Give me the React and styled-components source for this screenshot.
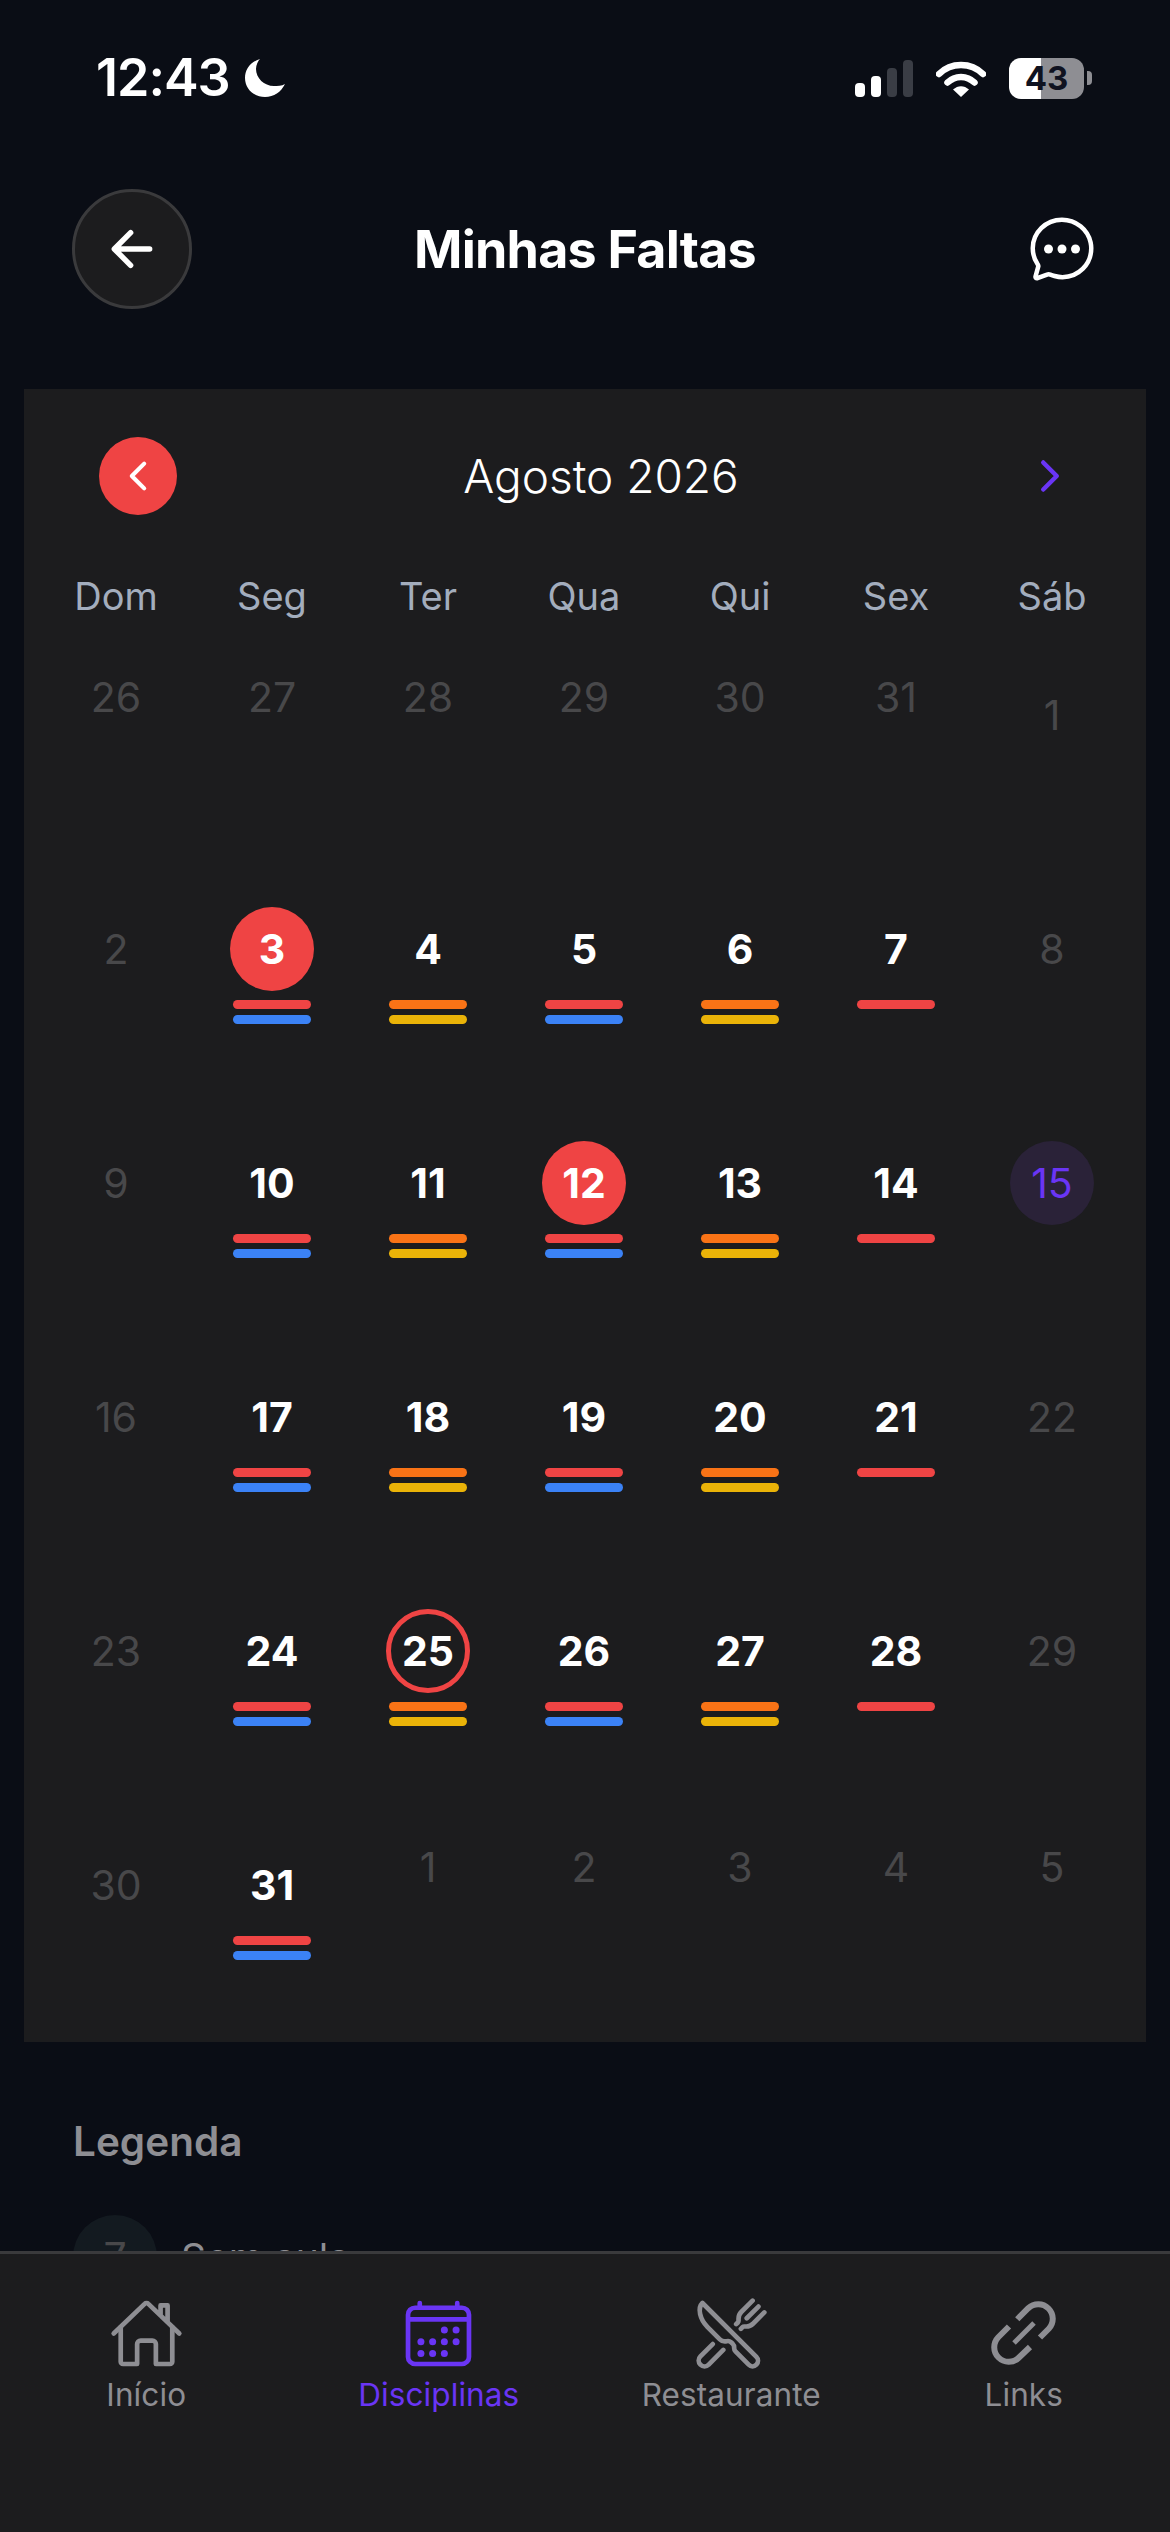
import React from 'react';
import styled, { createGlobalStyle } from 'styled-components';
import {
  IoArrowBackOutline,
  IoCalendarOutline,
  IoChatbubbleEllipsesOutline,
  IoChevronBackOutline,
  IoChevronForwardOutline,
  IoHomeOutline,
  IoRestaurantOutline,
} from 'react-icons/io5';

const RED = '#ef4444';
const BLUE = '#3b82f6';
const ORANGE = '#f97316';
const YELLOW = '#eab308';
const PURPLE = '#6a35f5';
const GRAY = '#8e8e93';

const GlobalStyle = createGlobalStyle`
  * { box-sizing: border-box; }
  html, body { margin: 0; padding: 0; background: #0a0d15; }
  body { font-family: Inter, "Noto Sans", sans-serif; }
`;

const Page = styled.div`
  position: relative;
  width: 1170px;
  height: 2532px;
  overflow: hidden;
  background: #0a0d15;
  color: #fff;
`;

const StatusBar = styled.div`
  height: 156px;
  padding: 0 78px 0 96px;
  display: flex;
  align-items: center;
  justify-content: space-between;
`;

const StatusLeft = styled.div`
  display: flex;
  align-items: center;
  gap: 14px;
`;

const Clock = styled.span`
  font-size: 52px;
  font-weight: 600;
  letter-spacing: -1px;
  line-height: 60px;
`;

const StatusRight = styled.div`
  display: flex;
  align-items: center;
`;

const Signal = styled.div`
  display: flex;
  align-items: flex-end;
  gap: 6px;
  height: 37px;
  margin-right: 23px;
`;

const SignalBar = styled.div`
  width: 10px;
  height: ${(p) => p.$h}px;
  border-radius: 4px;
  background: ${(p) => (p.$on ? '#fff' : '#3a3d45')};
`;

const Battery = styled.div`
  width: 75px;
  height: 41px;
  margin-left: 23px;
  border-radius: 12px;
  background: linear-gradient(90deg, #fff 43%, ${GRAY} 43%);
  color: #0f1220;
  font-size: 33px;
  font-weight: 700;
  line-height: 41px;
  text-align: center;
`;

const BatteryTip = styled.div`
  width: 5px;
  height: 14px;
  margin-left: 3px;
  border-radius: 0 4px 4px 0;
  background: ${GRAY};
`;

const Header = styled.header`
  margin-top: 33px;
  padding: 0 72px;
  display: grid;
  grid-template-columns: 120px 1fr 120px;
  align-items: center;
`;

const BackButton = styled.div`
  width: 120px;
  height: 120px;
  border-radius: 50%;
  background: #1c1c1e;
  border: 3px solid #3a3a3c;
  display: flex;
  align-items: center;
  justify-content: center;
  font-size: 58px;
`;

const Title = styled.h1`
  margin: 0;
  text-align: center;
  font-size: 52px;
  font-weight: 700;
  letter-spacing: -0.8px;
`;

const ChatButton = styled.div`
  display: flex;
  justify-content: flex-end;
  font-size: 72px;
  line-height: 0;
`;

const Card = styled.section`
  margin: 80px 24px 0;
  height: 1653px;
  padding: 48px 16px 0 14px;
  background: #1c1c1e;
`;

const MonthRow = styled.div`
  display: flex;
  align-items: center;
  justify-content: space-between;
  padding: 0 55px 0 61px;
`;

const PrevMonth = styled.div`
  width: 78px;
  height: 78px;
  border-radius: 50%;
  background: ${RED};
  display: flex;
  align-items: center;
  justify-content: center;
  font-size: 44px;
`;

const NextMonth = styled.div`
  width: 50px;
  height: 78px;
  display: flex;
  align-items: center;
  justify-content: center;
  color: ${PURPLE};
  font-size: 48px;
`;

const MonthName = styled.div`
  font-size: 46px;
  font-weight: 300;
`;

const WeekRow = styled.div`
  margin-top: 56px;
  display: grid;
  grid-template-columns: repeat(7, 156px);
`;

const WeekDay = styled.div`
  height: 50px;
  line-height: 50px;
  text-align: center;
  font-size: 38px;
  color: #a3adbd;
`;

const DayGrid = styled.div`
  margin-top: 52px;
  display: grid;
  grid-template-columns: repeat(7, 156px);
  grid-template-rows: repeat(5, 234px) 199px;
`;

const DayCell = styled.div`
  display: flex;
  flex-direction: column;
  align-items: center;
`;

const dayBg = { today: RED, weekend: '#2a2238' };

const DayNumber = styled.div`
  width: 84px;
  height: 84px;
  margin-top: ${(p) => (p.$lift ? -18 : 0)}px;
  border-radius: 50%;
  display: flex;
  align-items: center;
  justify-content: center;
  font-size: 41px;
  font-weight: ${(p) => (p.$active ? 700 : 400)};
  color: ${(p) => (p.$muted ? '#48484a' : p.$kind === 'weekend' ? PURPLE : '#fff')};
  background: ${(p) => dayBg[p.$kind] || 'transparent'};
  border: ${(p) => (p.$kind === 'ring' ? `5px solid ${RED}` : 'none')};
`;

const Bars = styled.div`
  margin-top: 9px;
  display: flex;
  flex-direction: column;
  gap: 6px;
`;

const Bar = styled.div`
  width: 78px;
  height: 9px;
  border-radius: 5px;
  background: ${(p) => p.$color};
`;

const Legend = styled.section`
  margin-top: 76px;
  padding-left: 73px;
`;

const LegendTitle = styled.div`
  font-size: 40.5px;
  font-weight: 600;
  line-height: 48px;
  color: ${GRAY};
`;

const LegendRow = styled.div`
  margin-top: 49px;
  display: flex;
  align-items: center;
  gap: 24px;
`;

const LegendDot = styled.div`
  width: 84px;
  height: 84px;
  border-radius: 50%;
  background: #131a20;
  color: #48484a;
  display: flex;
  align-items: center;
  justify-content: center;
  font-size: 41px;
`;

const LegendText = styled.div`
  font-size: 39px;
  color: ${GRAY};
`;

const TabBar = styled.nav`
  position: absolute;
  left: 0;
  right: 0;
  bottom: 0;
  height: 281px;
  padding-top: 42px;
  background: #1c1c1e;
  border-top: 3px solid #3a3a3c;
  display: grid;
  grid-template-columns: repeat(4, 1fr);
  align-items: start;
`;

const Tab = styled.div`
  display: flex;
  flex-direction: column;
  align-items: center;
  gap: 6px;
  font-size: 31.5px;
  letter-spacing: 0.1px;
  line-height: 36px;
  color: ${(p) => (p.$active ? PURPLE : GRAY)};
`;

const TabIcon = styled.div`
  height: 75px;
  font-size: 75px;
  line-height: 0;
`;

const WEEK = ['Dom', 'Seg', 'Ter', 'Qua', 'Qui', 'Sex', 'Sáb'];

const barsByColumn = [null, [RED, BLUE], [ORANGE, YELLOW], [RED, BLUE], [ORANGE, YELLOW], [RED], null];

const before = [26, 27, 28, 29, 30, 31];
const after = [1, 2, 3, 4, 5];

const buildDays = () => {
  const days = before.map((n, i) => ({ key: `b${n}`, n, column: i, muted: true, lift: true }));
  for (let n = 1; n <= 31; n++) {
    const column = (n + 5) % 7;
    const weekend = column === 0 || column === 6;
    let kind = null;
    if (n === 3 || n === 12) kind = 'today';
    if (n === 25) kind = 'ring';
    if (n === 15) kind = 'weekend';
    days.push({ key: `d${n}`, n, column, muted: weekend && n !== 15, kind, bars: barsByColumn[column] });
  }
  after.forEach((n, i) => days.push({ key: `a${n}`, n, column: i + 1, muted: true, lift: true }));
  return days;
};

const MoonIcon = () => (
  <svg width="42" height="40" viewBox="0 0 42 40">
    <path
      fill="#fff"
      d="M16 1C6 4 1 12 1 20c0 11 9 19 20 19 9 0 16-5 20-13-3 2-8 2-11 2-10 0-18-8-18-17 0-4 2-8 4-10z"
    />
  </svg>
);

const WifiIcon = () => (
  <svg width="50" height="37" viewBox="0 0 50 37">
    <path d="M3 14C15 2 35 2 47 14" fill="none" stroke="#fff" strokeWidth="6.5" strokeLinecap="round" />
    <path d="M11.5 22.5C19 15 31 15 38.5 22.5" fill="none" stroke="#fff" strokeWidth="6.5" strokeLinecap="round" />
    <path d="M17 29.5c5-4.5 11-4.5 16 0L25 37z" fill="#fff" />
  </svg>
);

const LinkIcon = () => (
  <svg width="75" height="75" viewBox="-5 -5 75 75" fill="none" stroke="currentColor">
    <path strokeWidth="6" d="M26.25 18.25L37.25 7.25A14.5 14.5 0 0 1 57.75 27.75L49 36.5" />
    <path strokeWidth="6" d="M18 25.5L7.25 36.25A14.5 14.5 0 0 0 27.75 56.75L39 46" />
    <path strokeWidth="5" d="M43 22L23 42" />
  </svg>
);

const App = () => {
  return (
    <Page>
      <GlobalStyle />
      <StatusBar>
        <StatusLeft>
          <Clock>12:43</Clock>
          <MoonIcon />
        </StatusLeft>
        <StatusRight>
          <Signal>
            <SignalBar $on $h={14} />
            <SignalBar $on $h={21} />
            <SignalBar $h={29} />
            <SignalBar $h={37} />
          </Signal>
          <WifiIcon />
          <Battery>43</Battery>
          <BatteryTip />
        </StatusRight>
      </StatusBar>

      <Header>
        <BackButton>
          <IoArrowBackOutline />
        </BackButton>
        <Title>Minhas Faltas</Title>
        <ChatButton>
          <IoChatbubbleEllipsesOutline />
        </ChatButton>
      </Header>

      <Card>
        <MonthRow>
          <PrevMonth>
            <IoChevronBackOutline />
          </PrevMonth>
          <MonthName>Agosto 2026</MonthName>
          <NextMonth>
            <IoChevronForwardOutline />
          </NextMonth>
        </MonthRow>
        <WeekRow>
          {WEEK.map((d) => (
            <WeekDay key={d}>{d}</WeekDay>
          ))}
        </WeekRow>
        <DayGrid>
          {buildDays().map((d) => (
            <DayCell key={d.key}>
              <DayNumber $muted={d.muted} $lift={d.lift} $kind={d.kind} $active={!d.muted && d.kind !== 'weekend'}>
                {d.n}
              </DayNumber>
              {d.bars && (
                <Bars>
                  {d.bars.map((c) => (
                    <Bar key={c} $color={c} />
                  ))}
                </Bars>
              )}
            </DayCell>
          ))}
        </DayGrid>
      </Card>

      <Legend>
        <LegendTitle>Legenda</LegendTitle>
        <LegendRow>
          <LegendDot>7</LegendDot>
          <LegendText>Sem aula</LegendText>
        </LegendRow>
      </Legend>

      <TabBar>
        <Tab>
          <TabIcon>
            <IoHomeOutline />
          </TabIcon>
          Início
        </Tab>
        <Tab $active>
          <TabIcon>
            <IoCalendarOutline />
          </TabIcon>
          Disciplinas
        </Tab>
        <Tab>
          <TabIcon>
            <IoRestaurantOutline />
          </TabIcon>
          Restaurante
        </Tab>
        <Tab>
          <TabIcon>
            <LinkIcon />
          </TabIcon>
          Links
        </Tab>
      </TabBar>
    </Page>
  );
};

export default App;
